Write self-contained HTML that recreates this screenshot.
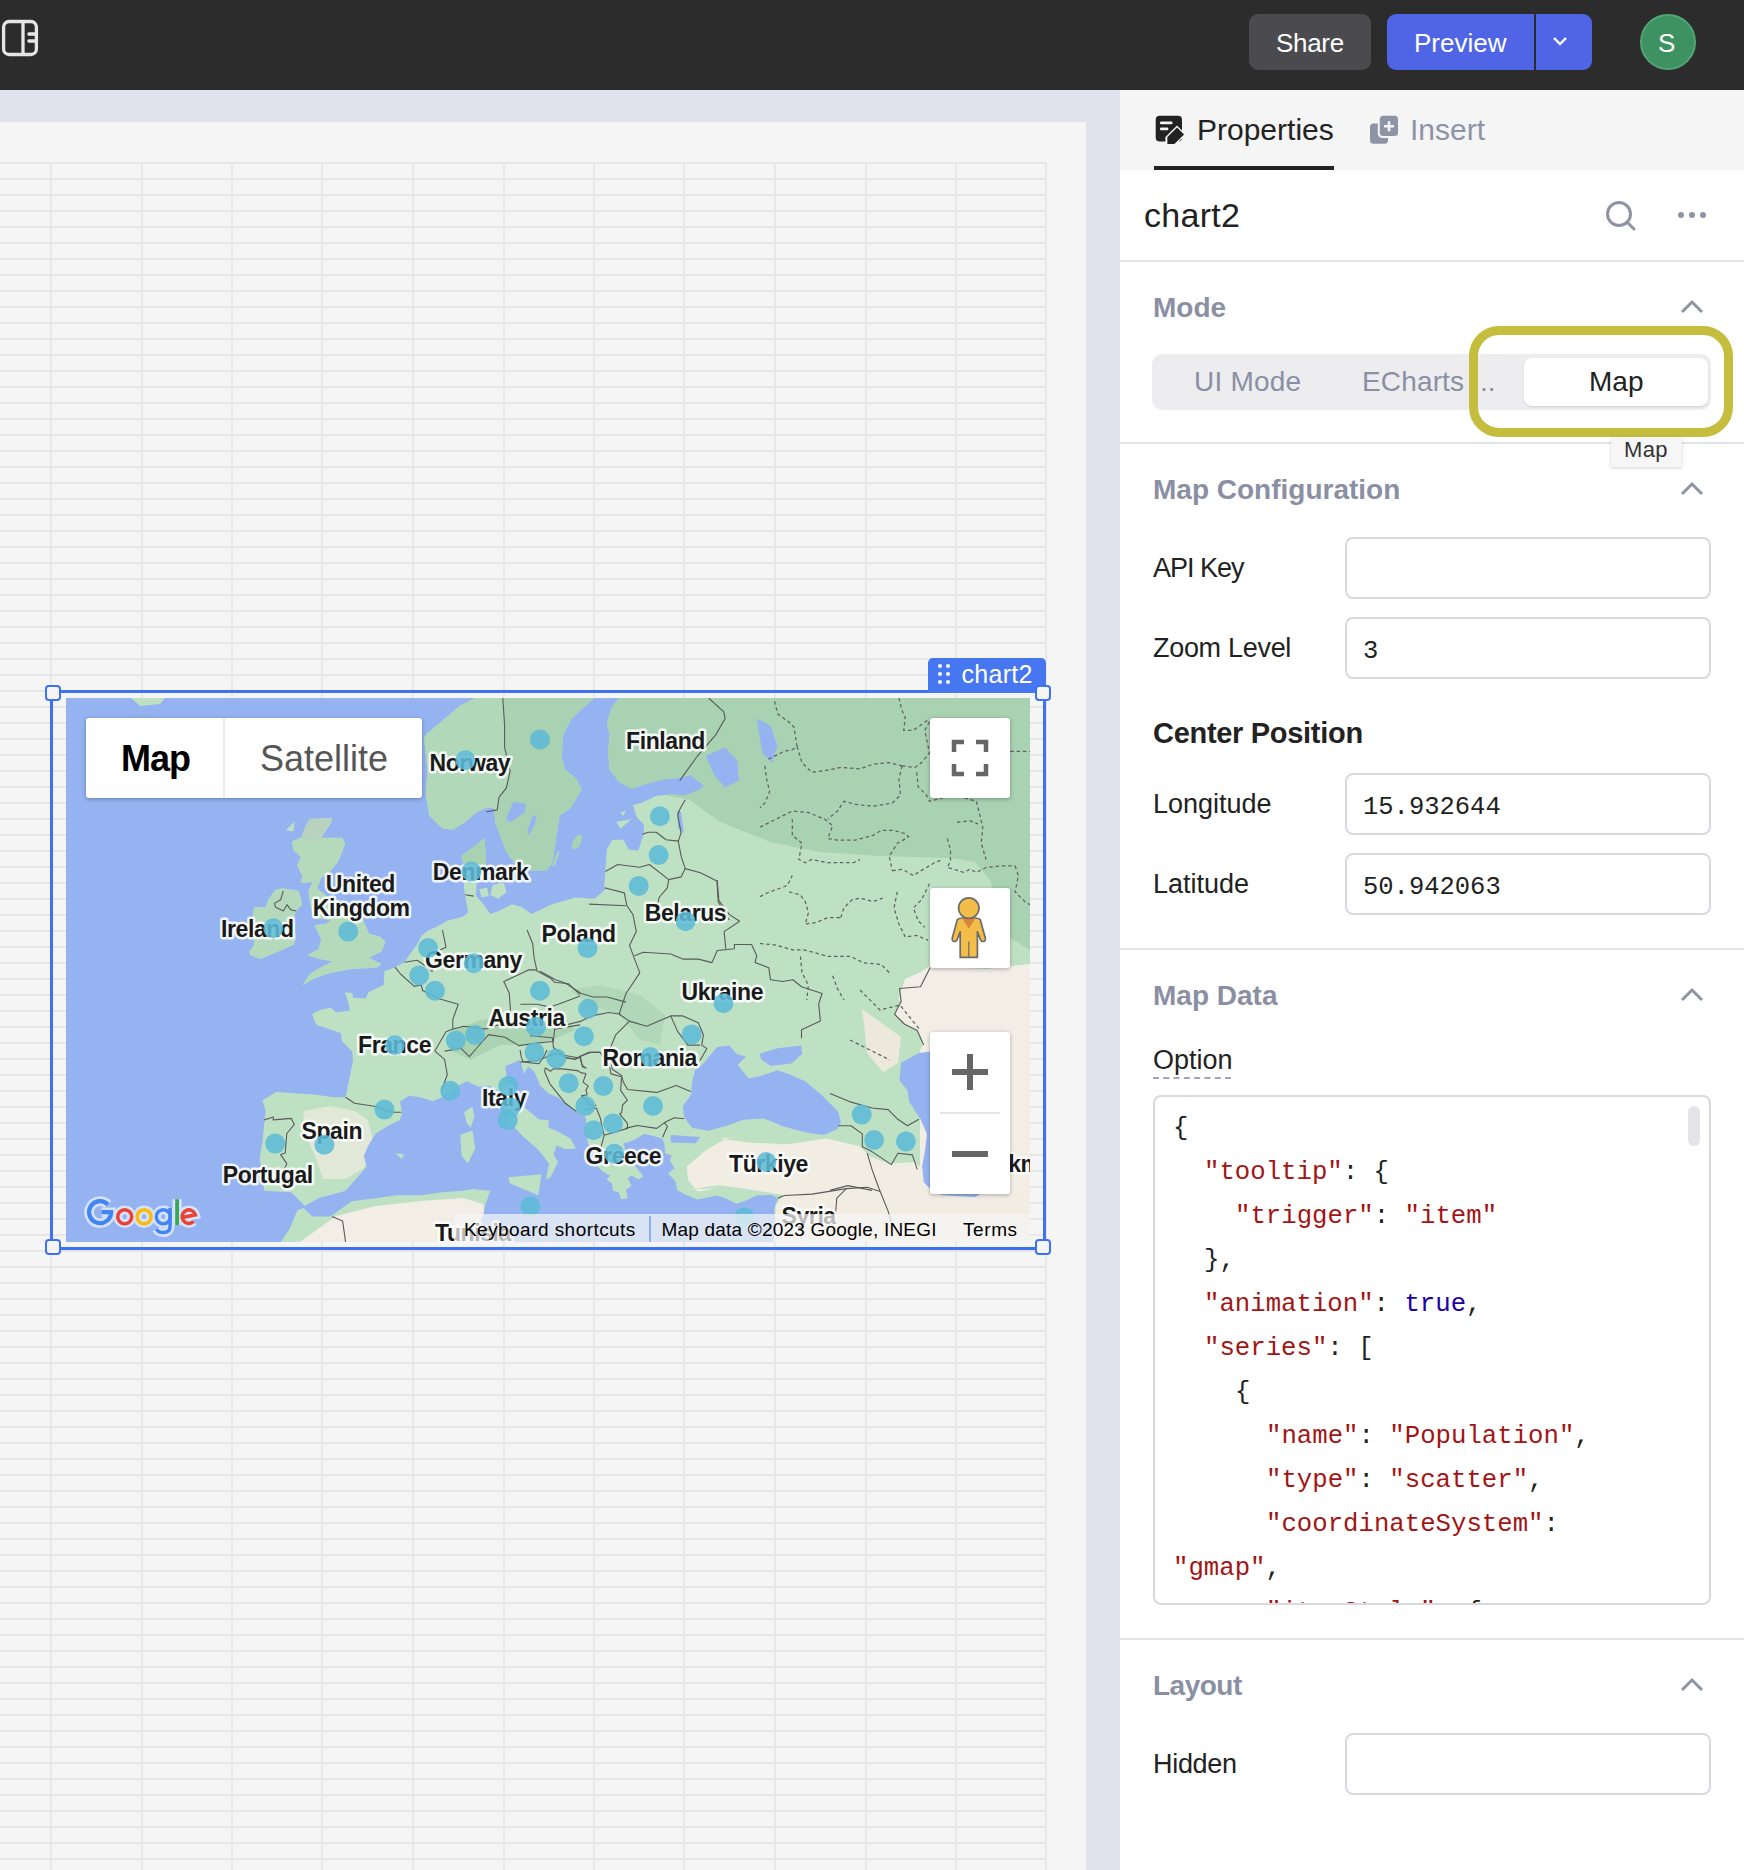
<!DOCTYPE html>
<html><head><meta charset="utf-8"><style>
html,body{margin:0;padding:0}
body{width:1744px;height:1870px;position:relative;overflow:hidden;background:#fff;font-family:"Liberation Sans",sans-serif}
.t{position:absolute;white-space:pre;line-height:1}
</style></head><body>
<div style="position:absolute;left:0px;top:90px;width:1120px;height:1780px;background:#e0e3eb"></div><div style="position:absolute;left:0px;top:122px;width:1086px;height:1748px;background:#f5f5f5"></div><svg style="position:absolute;left:0;top:0" width="1086" height="1870" shape-rendering="crispEdges"><rect x="0" y="162" width="1047" height="2" fill="#e6e6e6"/><rect x="0" y="178" width="1047" height="2" fill="#e6e6e6"/><rect x="0" y="194" width="1047" height="2" fill="#e6e6e6"/><rect x="0" y="210" width="1047" height="2" fill="#e6e6e6"/><rect x="0" y="226" width="1047" height="2" fill="#e6e6e6"/><rect x="0" y="242" width="1047" height="2" fill="#e6e6e6"/><rect x="0" y="258" width="1047" height="2" fill="#e6e6e6"/><rect x="0" y="274" width="1047" height="2" fill="#e6e6e6"/><rect x="0" y="290" width="1047" height="2" fill="#e6e6e6"/><rect x="0" y="306" width="1047" height="2" fill="#e6e6e6"/><rect x="0" y="322" width="1047" height="2" fill="#e6e6e6"/><rect x="0" y="338" width="1047" height="2" fill="#e6e6e6"/><rect x="0" y="354" width="1047" height="2" fill="#e6e6e6"/><rect x="0" y="370" width="1047" height="2" fill="#e6e6e6"/><rect x="0" y="386" width="1047" height="2" fill="#e6e6e6"/><rect x="0" y="402" width="1047" height="2" fill="#e6e6e6"/><rect x="0" y="418" width="1047" height="2" fill="#e6e6e6"/><rect x="0" y="434" width="1047" height="2" fill="#e6e6e6"/><rect x="0" y="450" width="1047" height="2" fill="#e6e6e6"/><rect x="0" y="466" width="1047" height="2" fill="#e6e6e6"/><rect x="0" y="482" width="1047" height="2" fill="#e6e6e6"/><rect x="0" y="498" width="1047" height="2" fill="#e6e6e6"/><rect x="0" y="514" width="1047" height="2" fill="#e6e6e6"/><rect x="0" y="530" width="1047" height="2" fill="#e6e6e6"/><rect x="0" y="546" width="1047" height="2" fill="#e6e6e6"/><rect x="0" y="562" width="1047" height="2" fill="#e6e6e6"/><rect x="0" y="578" width="1047" height="2" fill="#e6e6e6"/><rect x="0" y="594" width="1047" height="2" fill="#e6e6e6"/><rect x="0" y="610" width="1047" height="2" fill="#e6e6e6"/><rect x="0" y="626" width="1047" height="2" fill="#e6e6e6"/><rect x="0" y="642" width="1047" height="2" fill="#e6e6e6"/><rect x="0" y="658" width="1047" height="2" fill="#e6e6e6"/><rect x="0" y="674" width="1047" height="2" fill="#e6e6e6"/><rect x="0" y="690" width="1047" height="2" fill="#e6e6e6"/><rect x="0" y="706" width="1047" height="2" fill="#e6e6e6"/><rect x="0" y="722" width="1047" height="2" fill="#e6e6e6"/><rect x="0" y="738" width="1047" height="2" fill="#e6e6e6"/><rect x="0" y="754" width="1047" height="2" fill="#e6e6e6"/><rect x="0" y="770" width="1047" height="2" fill="#e6e6e6"/><rect x="0" y="786" width="1047" height="2" fill="#e6e6e6"/><rect x="0" y="802" width="1047" height="2" fill="#e6e6e6"/><rect x="0" y="818" width="1047" height="2" fill="#e6e6e6"/><rect x="0" y="834" width="1047" height="2" fill="#e6e6e6"/><rect x="0" y="850" width="1047" height="2" fill="#e6e6e6"/><rect x="0" y="866" width="1047" height="2" fill="#e6e6e6"/><rect x="0" y="882" width="1047" height="2" fill="#e6e6e6"/><rect x="0" y="898" width="1047" height="2" fill="#e6e6e6"/><rect x="0" y="914" width="1047" height="2" fill="#e6e6e6"/><rect x="0" y="930" width="1047" height="2" fill="#e6e6e6"/><rect x="0" y="946" width="1047" height="2" fill="#e6e6e6"/><rect x="0" y="962" width="1047" height="2" fill="#e6e6e6"/><rect x="0" y="978" width="1047" height="2" fill="#e6e6e6"/><rect x="0" y="994" width="1047" height="2" fill="#e6e6e6"/><rect x="0" y="1010" width="1047" height="2" fill="#e6e6e6"/><rect x="0" y="1026" width="1047" height="2" fill="#e6e6e6"/><rect x="0" y="1042" width="1047" height="2" fill="#e6e6e6"/><rect x="0" y="1058" width="1047" height="2" fill="#e6e6e6"/><rect x="0" y="1074" width="1047" height="2" fill="#e6e6e6"/><rect x="0" y="1090" width="1047" height="2" fill="#e6e6e6"/><rect x="0" y="1106" width="1047" height="2" fill="#e6e6e6"/><rect x="0" y="1122" width="1047" height="2" fill="#e6e6e6"/><rect x="0" y="1138" width="1047" height="2" fill="#e6e6e6"/><rect x="0" y="1154" width="1047" height="2" fill="#e6e6e6"/><rect x="0" y="1170" width="1047" height="2" fill="#e6e6e6"/><rect x="0" y="1186" width="1047" height="2" fill="#e6e6e6"/><rect x="0" y="1202" width="1047" height="2" fill="#e6e6e6"/><rect x="0" y="1218" width="1047" height="2" fill="#e6e6e6"/><rect x="0" y="1234" width="1047" height="2" fill="#e6e6e6"/><rect x="0" y="1250" width="1047" height="2" fill="#e6e6e6"/><rect x="0" y="1266" width="1047" height="2" fill="#e6e6e6"/><rect x="0" y="1282" width="1047" height="2" fill="#e6e6e6"/><rect x="0" y="1298" width="1047" height="2" fill="#e6e6e6"/><rect x="0" y="1314" width="1047" height="2" fill="#e6e6e6"/><rect x="0" y="1330" width="1047" height="2" fill="#e6e6e6"/><rect x="0" y="1346" width="1047" height="2" fill="#e6e6e6"/><rect x="0" y="1362" width="1047" height="2" fill="#e6e6e6"/><rect x="0" y="1378" width="1047" height="2" fill="#e6e6e6"/><rect x="0" y="1394" width="1047" height="2" fill="#e6e6e6"/><rect x="0" y="1410" width="1047" height="2" fill="#e6e6e6"/><rect x="0" y="1426" width="1047" height="2" fill="#e6e6e6"/><rect x="0" y="1442" width="1047" height="2" fill="#e6e6e6"/><rect x="0" y="1458" width="1047" height="2" fill="#e6e6e6"/><rect x="0" y="1474" width="1047" height="2" fill="#e6e6e6"/><rect x="0" y="1490" width="1047" height="2" fill="#e6e6e6"/><rect x="0" y="1506" width="1047" height="2" fill="#e6e6e6"/><rect x="0" y="1522" width="1047" height="2" fill="#e6e6e6"/><rect x="0" y="1538" width="1047" height="2" fill="#e6e6e6"/><rect x="0" y="1554" width="1047" height="2" fill="#e6e6e6"/><rect x="0" y="1570" width="1047" height="2" fill="#e6e6e6"/><rect x="0" y="1586" width="1047" height="2" fill="#e6e6e6"/><rect x="0" y="1602" width="1047" height="2" fill="#e6e6e6"/><rect x="0" y="1618" width="1047" height="2" fill="#e6e6e6"/><rect x="0" y="1634" width="1047" height="2" fill="#e6e6e6"/><rect x="0" y="1650" width="1047" height="2" fill="#e6e6e6"/><rect x="0" y="1666" width="1047" height="2" fill="#e6e6e6"/><rect x="0" y="1682" width="1047" height="2" fill="#e6e6e6"/><rect x="0" y="1698" width="1047" height="2" fill="#e6e6e6"/><rect x="0" y="1714" width="1047" height="2" fill="#e6e6e6"/><rect x="0" y="1730" width="1047" height="2" fill="#e6e6e6"/><rect x="0" y="1746" width="1047" height="2" fill="#e6e6e6"/><rect x="0" y="1762" width="1047" height="2" fill="#e6e6e6"/><rect x="0" y="1778" width="1047" height="2" fill="#e6e6e6"/><rect x="0" y="1794" width="1047" height="2" fill="#e6e6e6"/><rect x="0" y="1810" width="1047" height="2" fill="#e6e6e6"/><rect x="0" y="1826" width="1047" height="2" fill="#e6e6e6"/><rect x="0" y="1842" width="1047" height="2" fill="#e6e6e6"/><rect x="0" y="1858" width="1047" height="2" fill="#e6e6e6"/><rect x="50" y="162" width="2" height="1708" fill="#e8e8e8"/><rect x="141" y="162" width="2" height="1708" fill="#e8e8e8"/><rect x="231" y="162" width="2" height="1708" fill="#e8e8e8"/><rect x="321" y="162" width="2" height="1708" fill="#e8e8e8"/><rect x="412" y="162" width="2" height="1708" fill="#e8e8e8"/><rect x="503" y="162" width="2" height="1708" fill="#e8e8e8"/><rect x="593" y="162" width="2" height="1708" fill="#e8e8e8"/><rect x="683" y="162" width="2" height="1708" fill="#e8e8e8"/><rect x="774" y="162" width="2" height="1708" fill="#e8e8e8"/><rect x="865" y="162" width="2" height="1708" fill="#e8e8e8"/><rect x="955" y="162" width="2" height="1708" fill="#e8e8e8"/><rect x="1045" y="162" width="2" height="1708" fill="#e8e8e8"/></svg><div style="position:absolute;left:0px;top:0px;width:1744px;height:90px;background:#2c2c2c"></div><svg style="position:absolute;left:0;top:16px" width="44" height="44" viewBox="0 0 44 44"><rect x="3.6" y="5.5" width="32.8" height="33" rx="5.5" fill="none" stroke="#e6e6e6" stroke-width="3.3"/><line x1="23" y1="5.5" x2="23" y2="38.5" stroke="#e6e6e6" stroke-width="3.3"/><line x1="29" y1="18" x2="36" y2="18" stroke="#e6e6e6" stroke-width="3.6" stroke-linecap="round"/><line x1="29" y1="25" x2="36" y2="25" stroke="#e6e6e6" stroke-width="3.6" stroke-linecap="round"/></svg><div style="position:absolute;left:1249px;top:14px;width:122px;height:56px;background:#4a4a4f;border-radius:9px"></div><div class="t" style="left:1276px;top:29.99px;font-size:26px;color:#fff;font-weight:normal;font-family:'Liberation Sans',sans-serif;letter-spacing:-0.3px;">Share</div><div style="position:absolute;left:1387px;top:14px;width:205px;height:56px;background:#4f65e6;border-radius:9px"></div><div style="position:absolute;left:1534px;top:14px;width:2px;height:56px;background:#2c2c2c"></div><div class="t" style="left:1414px;top:29.99px;font-size:26px;color:#fff;font-weight:normal;font-family:'Liberation Sans',sans-serif;">Preview</div><svg style="position:absolute;left:1550px;top:34px" width="20" height="14" viewBox="0 0 20 14"><polyline points="4,4 10,10 16,4" fill="none" stroke="#fff" stroke-width="2.4"/></svg><div style="position:absolute;left:1640px;top:14px;width:56px;height:56px;background:#3e9160;border-radius:50%;box-sizing:border-box;border:2px solid #52a574"></div><div class="t" style="left:1658px;top:29.99px;font-size:26px;color:#fff;font-weight:normal;font-family:'Liberation Sans',sans-serif;">S</div><div style="position:absolute;left:1120px;top:90px;width:624px;height:80px;background:#f5f5f5"></div><div style="position:absolute;left:1120px;top:170px;width:624px;height:1700px;background:#fff"></div><svg style="position:absolute;left:1154px;top:112px" width="34" height="34" viewBox="0 0 34 34"><rect x="1.7" y="3.7" width="26.3" height="25.8" rx="4" fill="#222"/><rect x="5.9" y="9.6" width="12.7" height="2.6" rx="1.3" fill="#f5f5f5"/><rect x="5.9" y="15.6" width="8.5" height="2.6" rx="1.3" fill="#f5f5f5"/><path d="M11.4 25 L23 13.4 L32 22.4 L20.4 34 L11.4 34 Z" fill="#f5f5f5"/><path d="M13.4 25.05 L23.05 15.4 L30.06 22.4 L20.4 32.1 L13.4 32.1 Z" fill="#222"/></svg><div class="t" style="left:1197px;top:114.61px;font-size:30px;color:#222;font-weight:normal;font-family:'Liberation Sans',sans-serif;">Properties</div><div style="position:absolute;left:1154px;top:166px;width:180px;height:4px;background:#222"></div><svg style="position:absolute;left:1368px;top:112px" width="34" height="34" viewBox="0 0 34 34"><rect x="2" y="11.6" width="18" height="20.2" rx="3.5" fill="#8f93a6"/><rect x="9.8" y="1.7" width="22.2" height="24.3" rx="4.5" fill="#f5f5f5"/><rect x="11.8" y="3.7" width="18.2" height="20.3" rx="3.5" fill="#8f93a6"/><path d="M21 9.3 V19.3 M16 14.3 H26" stroke="#f5f5f5" stroke-width="2.6"/></svg><div class="t" style="left:1410px;top:114.61px;font-size:30px;color:#8f93a6;font-weight:normal;font-family:'Liberation Sans',sans-serif;">Insert</div><div class="t" style="left:1144px;top:198.22px;font-size:34px;color:#222;font-weight:normal;font-family:'Liberation Sans',sans-serif;letter-spacing:0.3px;">chart2</div><svg style="position:absolute;left:1600px;top:196px" width="40" height="40" viewBox="0 0 40 40"><circle cx="19" cy="18" r="11.5" fill="none" stroke="#8f93a6" stroke-width="3"/><line x1="27.5" y1="26.5" x2="34" y2="33" stroke="#8f93a6" stroke-width="3" stroke-linecap="round"/></svg><div style="position:absolute;left:1678px;top:212px;width:6px;height:6px;background:#8f93a6;border-radius:50%"></div><div style="position:absolute;left:1689px;top:212px;width:6px;height:6px;background:#8f93a6;border-radius:50%"></div><div style="position:absolute;left:1700px;top:212px;width:6px;height:6px;background:#8f93a6;border-radius:50%"></div><div style="position:absolute;left:1120px;top:260px;width:624px;height:2px;background:#e2e4ea"></div><div class="t" style="left:1153px;top:294.30px;font-size:28px;color:#8b8fa3;font-weight:bold;font-family:'Liberation Sans',sans-serif;">Mode</div><svg style="position:absolute;left:1678px;top:298px" width="28" height="18" viewBox="0 0 28 18"><polyline points="4,14 14,4 24,14" fill="none" stroke="#8f93a6" stroke-width="3"/></svg><div style="position:absolute;left:1152px;top:354px;width:559px;height:56px;background:#ededf0;border-radius:10px"></div><div style="position:absolute;left:1524px;top:358px;width:184px;height:48px;background:#fff;border-radius:8px;box-shadow:0 1px 2px rgba(0,0,0,0.12)"></div><div class="t" style="left:1194px;top:368.30px;font-size:28px;color:#8b8fa3;font-weight:normal;font-family:'Liberation Sans',sans-serif;letter-spacing:0.2px;">UI Mode</div><div class="t" style="left:1362px;top:368.30px;font-size:28px;color:#8b8fa3;font-weight:normal;font-family:'Liberation Sans',sans-serif;letter-spacing:0.15px;">ECharts</div><div class="t" style="left:1480px;top:368.30px;font-size:28px;color:#8b8fa3;font-weight:normal;font-family:'Liberation Sans',sans-serif;">..</div><div class="t" style="left:1589px;top:368.30px;font-size:28px;color:#222;font-weight:normal;font-family:'Liberation Sans',sans-serif;">Map</div><div style="position:absolute;left:1469px;top:326px;width:264px;height:111px;box-sizing:border-box;border:9px solid #c5bd3d;border-radius:30px"></div><div style="position:absolute;left:1120px;top:442px;width:624px;height:2px;background:#e2e4ea"></div><div style="position:absolute;left:1611px;top:437px;width:71px;height:30px;background:#f6f6f6;box-shadow:0 1px 3px rgba(0,0,0,0.18)"></div><div class="t" style="left:1624px;top:439.38px;font-size:22px;color:#333;font-weight:normal;font-family:'Liberation Sans',sans-serif;letter-spacing:0.3px;">Map</div><div class="t" style="left:1153px;top:476.30px;font-size:28px;color:#8b8fa3;font-weight:bold;font-family:'Liberation Sans',sans-serif;">Map Configuration</div><svg style="position:absolute;left:1678px;top:480px" width="28" height="18" viewBox="0 0 28 18"><polyline points="4,14 14,4 24,14" fill="none" stroke="#8f93a6" stroke-width="3"/></svg><div class="t" style="left:1153px;top:555.14px;font-size:27px;color:#222;font-weight:normal;font-family:'Liberation Sans',sans-serif;letter-spacing:-1.0px;">API Key</div><div style="position:absolute;left:1345px;top:537px;width:366px;height:62px;box-sizing:border-box;border:2px solid #d8d9df;border-radius:8px;background:#fff"></div><div class="t" style="left:1153px;top:635.14px;font-size:27px;color:#222;font-weight:normal;font-family:'Liberation Sans',sans-serif;letter-spacing:-0.3px;">Zoom Level</div><div style="position:absolute;left:1345px;top:617px;width:366px;height:62px;box-sizing:border-box;border:2px solid #d8d9df;border-radius:8px;background:#fff"></div><div class="t" style="left:1363px;top:639.47px;font-size:25.5px;color:#222;font-weight:normal;font-family:'Liberation Mono',monospace;">3</div><div class="t" style="left:1153px;top:719.45px;font-size:29px;color:#222;font-weight:bold;font-family:'Liberation Sans',sans-serif;letter-spacing:-0.3px;">Center Position</div><div class="t" style="left:1153px;top:791.14px;font-size:27px;color:#222;font-weight:normal;font-family:'Liberation Sans',sans-serif;">Longitude</div><div style="position:absolute;left:1345px;top:773px;width:366px;height:62px;box-sizing:border-box;border:2px solid #d8d9df;border-radius:8px;background:#fff"></div><div class="t" style="left:1363px;top:795.47px;font-size:25.5px;color:#222;font-weight:normal;font-family:'Liberation Mono',monospace;">15.932644</div><div class="t" style="left:1153px;top:871.14px;font-size:27px;color:#222;font-weight:normal;font-family:'Liberation Sans',sans-serif;">Latitude</div><div style="position:absolute;left:1345px;top:853px;width:366px;height:62px;box-sizing:border-box;border:2px solid #d8d9df;border-radius:8px;background:#fff"></div><div class="t" style="left:1363px;top:875.47px;font-size:25.5px;color:#222;font-weight:normal;font-family:'Liberation Mono',monospace;">50.942063</div><div style="position:absolute;left:1120px;top:948px;width:624px;height:2px;background:#e2e4ea"></div><div class="t" style="left:1153px;top:982.30px;font-size:28px;color:#8b8fa3;font-weight:bold;font-family:'Liberation Sans',sans-serif;">Map Data</div><svg style="position:absolute;left:1678px;top:986px" width="28" height="18" viewBox="0 0 28 18"><polyline points="4,14 14,4 24,14" fill="none" stroke="#8f93a6" stroke-width="3"/></svg><div class="t" style="left:1153px;top:1047.14px;font-size:27px;color:#222;font-weight:normal;font-family:'Liberation Sans',sans-serif;">Option</div><div style="position:absolute;left:1153px;top:1077px;width:78px;height:0;border-top:2px dashed #a0a4b8"></div><div style="position:absolute;left:1153px;top:1095px;width:558px;height:510px;box-sizing:border-box;border:2px solid #d8d9df;border-radius:8px;background:#fff"></div><div style="position:absolute;left:1688px;top:1106px;width:12px;height:40px;background:#e3e3e8;border-radius:6px"></div><div style="position:absolute;left:1155px;top:1097px;width:554px;height:506px;overflow:hidden;border-radius:6px"><div class="t" style="left:18px;top:19.31px;font-size:25.7px;color:#222;font-weight:normal;font-family:'Liberation Mono',monospace;"><span style="color:#222">{</span></div><div class="t" style="left:49px;top:63.31px;font-size:25.7px;color:#222;font-weight:normal;font-family:'Liberation Mono',monospace;"><span style="color:#a31515">"tooltip"</span><span style="color:#222">:&nbsp;{</span></div><div class="t" style="left:80px;top:107.31px;font-size:25.7px;color:#222;font-weight:normal;font-family:'Liberation Mono',monospace;"><span style="color:#a31515">"trigger"</span><span style="color:#222">:&nbsp;</span><span style="color:#a31515">"item"</span></div><div class="t" style="left:49px;top:151.31px;font-size:25.7px;color:#222;font-weight:normal;font-family:'Liberation Mono',monospace;"><span style="color:#222">},</span></div><div class="t" style="left:49px;top:195.31px;font-size:25.7px;color:#222;font-weight:normal;font-family:'Liberation Mono',monospace;"><span style="color:#a31515">"animation"</span><span style="color:#222">:&nbsp;</span><span style="color:#1c00a3">true</span><span style="color:#222">,</span></div><div class="t" style="left:49px;top:239.31px;font-size:25.7px;color:#222;font-weight:normal;font-family:'Liberation Mono',monospace;"><span style="color:#a31515">"series"</span><span style="color:#222">:&nbsp;[</span></div><div class="t" style="left:80px;top:283.31px;font-size:25.7px;color:#222;font-weight:normal;font-family:'Liberation Mono',monospace;"><span style="color:#222">{</span></div><div class="t" style="left:111px;top:327.31px;font-size:25.7px;color:#222;font-weight:normal;font-family:'Liberation Mono',monospace;"><span style="color:#a31515">"name"</span><span style="color:#222">:&nbsp;</span><span style="color:#a31515">"Population"</span><span style="color:#222">,</span></div><div class="t" style="left:111px;top:371.31px;font-size:25.7px;color:#222;font-weight:normal;font-family:'Liberation Mono',monospace;"><span style="color:#a31515">"type"</span><span style="color:#222">:&nbsp;</span><span style="color:#a31515">"scatter"</span><span style="color:#222">,</span></div><div class="t" style="left:111px;top:415.31px;font-size:25.7px;color:#222;font-weight:normal;font-family:'Liberation Mono',monospace;"><span style="color:#a31515">"coordinateSystem"</span><span style="color:#222">:</span></div><div class="t" style="left:18px;top:459.31px;font-size:25.7px;color:#222;font-weight:normal;font-family:'Liberation Mono',monospace;"><span style="color:#a31515">"gmap"</span><span style="color:#222">,</span></div><div class="t" style="left:111px;top:503.31px;font-size:25.7px;color:#222;font-weight:normal;font-family:'Liberation Mono',monospace;"><span style="color:#a31515">"itemStyle"</span><span style="color:#222">:&nbsp;{</span></div></div><div style="position:absolute;left:1120px;top:1638px;width:624px;height:2px;background:#e2e4ea"></div><div class="t" style="left:1153px;top:1672.30px;font-size:28px;color:#8b8fa3;font-weight:bold;font-family:'Liberation Sans',sans-serif;letter-spacing:-0.5px;">Layout</div><svg style="position:absolute;left:1678px;top:1676px" width="28" height="18" viewBox="0 0 28 18"><polyline points="4,14 14,4 24,14" fill="none" stroke="#8f93a6" stroke-width="3"/></svg><div class="t" style="left:1153px;top:1751.14px;font-size:27px;color:#222;font-weight:normal;font-family:'Liberation Sans',sans-serif;letter-spacing:-0.3px;">Hidden</div><div style="position:absolute;left:1345px;top:1733px;width:366px;height:62px;box-sizing:border-box;border:2px solid #d8d9df;border-radius:8px;background:#fff"></div><svg style="position:absolute;left:66px;top:698px" width="964" height="544" viewBox="66 698 964 544"><defs><clipPath id="land"><path d="M619.0,698.0 L1030.0,698.0 L1030.0,1242.0 L790.0,1242.0 L774.0,1242.0 L775.5,1218.9 L774.2,1209.3 L777.6,1198.2 L772.1,1194.8 L757.0,1195.5 L744.6,1201.0 L736.3,1203.8 L725.3,1198.2 L717.1,1195.5 L697.8,1199.6 L699.3,1200.2 L685.5,1194.7 L677.2,1190.1 L675.4,1180.9 L668.1,1173.6 L674.5,1168.1 L669.9,1160.7 L671.7,1155.2 L665.3,1153.4 L664.4,1144.2 L662.6,1138.7 L649.7,1135.0 L644.2,1134.1 L635.0,1139.6 L627.7,1142.4 L623.1,1143.3 L625.9,1151.6 L631.4,1160.7 L636.0,1167.2 L643.3,1176.3 L638.7,1179.5 L631.4,1175.4 L627.7,1178.2 L631.4,1185.5 L625.9,1190.1 L627.7,1198.3 L621.3,1199.3 L618.5,1191.9 L613.0,1191.0 L612.1,1183.7 L606.6,1179.1 L610.3,1175.4 L602.9,1171.7 L598.3,1167.2 L593.8,1153.4 L588.3,1144.2 L585.5,1131.4 L586.4,1116.7 L587.5,1127.5 L587.2,1121.7 L584.9,1116.5 L576.3,1111.4 L565.9,1103.3 L557.3,1097.0 L548.7,1093.6 L540.1,1085.6 L537.3,1078.7 L534.4,1071.8 L528.1,1066.6 L524.1,1074.1 L520.1,1060.3 L519.8,1060.0 L505.3,1066.2 L506.3,1074.1 L506.7,1082.7 L525.2,1107.9 L539.0,1119.4 L548.7,1120.0 L548.2,1127.4 L560.2,1132.6 L571.7,1139.4 L571.6,1141.0 L576.1,1148.5 L565.6,1149.3 L556.5,1145.5 L553.5,1154.6 L558.0,1162.1 L550.5,1177.2 L546.0,1179.5 L549.0,1163.6 L538.4,1150.0 L524.9,1138.0 L509.8,1122.9 L502.2,1107.8 L501.2,1092.3 L488.8,1085.4 L478.5,1086.8 L466.8,1081.3 L458.5,1085.4 L442.7,1097.1 L432.4,1101.3 L427.6,1099.2 L420.0,1097.8 L454.2,1089.7 L442.1,1095.7 L431.6,1100.3 L421.0,1097.3 L408.9,1095.7 L399.9,1101.8 L402.1,1112.3 L399.9,1119.9 L387.8,1125.9 L375.7,1133.5 L368.2,1145.5 L363.7,1156.1 L366.7,1166.6 L357.6,1177.2 L345.6,1190.8 L318.4,1198.3 L304.9,1205.9 L300.3,1201.3 L291.3,1192.3 L264.1,1190.8 L262.6,1174.2 L259.6,1159.1 L262.6,1141.0 L264.1,1125.9 L265.6,1110.8 L262.6,1100.3 L276.2,1092.0 L297.3,1093.5 L312.4,1094.2 L333.5,1097.3 L345.6,1097.3 L353.1,1060.0 L352.2,1051.6 L341.8,1041.1 L341.0,1033.1 L316.9,1025.1 L314.5,1021.1 L312.1,1013.9 L318.5,1010.6 L330.6,1007.4 L336.2,1012.2 L349.8,1010.6 L348.2,1001.8 L345.0,992.2 L352.2,993.0 L353.1,997.8 L365.9,998.6 L368.3,992.2 L383.6,985.0 L384.4,971.3 L394.8,967.3 L408.4,956.1 L395.1,967.6 L404.8,962.1 L410.3,953.8 L417.2,944.2 L421.3,936.0 L428.2,930.5 L437.8,926.3 L447.4,920.8 L462.6,916.7 L468.1,912.6 L463.9,887.8 L465.3,868.5 L461.2,856.1 L476.3,845.1 L484.6,838.3 L486.0,863.0 L484.6,871.3 L476.3,885.0 L476.3,896.1 L484.6,905.7 L490.1,913.9 L498.3,911.2 L512.1,904.3 L521.7,907.1 L531.4,913.9 L552.0,904.3 L575.4,897.4 L594.7,898.8 L607.1,887.8 L604.0,887.9 L605.4,870.0 L606.8,849.4 L612.3,839.7 L623.3,839.7 L628.8,849.4 L638.4,850.7 L641.2,841.1 L643.9,834.2 L643.9,824.6 L637.1,817.7 L632.9,805.3 L642.6,802.6 L656.3,795.7 L674.2,794.3 L683.8,795.7 L692.1,792.9 L697.6,790.2 L704.5,786.1 L697.6,780.6 L690.7,775.1 L679.7,777.8 L664.6,779.2 L648.1,783.3 L631.6,788.8 L619.2,781.9 L615.0,776.4 L609.5,769.6 L608.2,753.0 L609.5,733.8 L606.8,722.8 L612.3,706.3 L619.2,698.0Z"/><path d="M475.2,698.0 L460.6,705.3 L447.7,716.3 L423.9,736.5 L425.7,753.0 L427.5,771.4 L425.7,793.4 L429.4,815.4 L442.2,828.3 L453.2,830.1 L464.2,822.8 L477.1,811.8 L486.2,808.1 L493.6,808.1 L495.4,822.8 L500.9,837.4 L506.4,852.1 L517.4,866.8 L528.4,870.5 L546.8,870.5 L552.3,863.1 L554.1,852.1 L557.8,826.4 L559.6,815.4 L570.6,808.1 L581.7,789.7 L576.1,778.7 L565.1,769.6 L561.5,756.7 L563.3,734.7 L570.6,720.0 L581.7,709.0 L594.5,698.0Z"/><path d="M280.7,1242.1 L289.8,1228.5 L297.3,1210.4 L303.3,1208.1 L312.4,1216.4 L330.5,1216.4 L351.6,1201.3 L375.7,1198.3 L396.9,1195.3 L421.0,1195.3 L442.1,1192.3 L463.2,1190.8 L480.0,1187.8 L473.6,1189.3 L490.2,1190.8 L485.6,1204.3 L482.6,1216.4 L470.0,1242.0Z"/><path d="M331.8,817.7 L331.2,822.7 L321.1,837.8 L342.6,837.8 L345.1,844.2 L338.8,860.6 L331.2,870.6 L321.1,878.2 L317.3,888.3 L326.2,895.9 L338.8,900.9 L362.7,918.6 L369.0,933.7 L379.1,936.2 L385.4,941.3 L381.7,951.4 L369.0,957.7 L381.7,964.0 L376.6,967.8 L351.4,969.0 L326.2,974.1 L313.5,979.1 L302.2,985.4 L309.8,974.1 L319.8,967.8 L332.5,961.5 L319.8,959.0 L307.2,955.2 L318.6,948.9 L321.1,938.8 L316.1,928.7 L314.8,924.9 L326.2,923.6 L331.2,919.8 L313.5,918.6 L309.8,900.9 L308.5,890.8 L312.3,882.0 L300.9,883.3 L302.2,875.7 L297.1,865.6 L300.9,856.8 L293.4,850.5 L292.1,841.6 L300.9,837.8 L306.0,825.2 L309.8,818.9Z"/><path d="M268.1,899.7 L275.7,889.6 L283.3,888.3 L298.4,890.8 L300.9,898.4 L302.2,904.7 L295.9,911.0 L293.4,921.1 L295.9,938.8 L293.4,945.1 L278.2,951.4 L260.6,959.0 L250.5,955.2 L249.2,951.4 L254.2,945.1 L254.2,938.8 L253.0,913.5 L254.2,907.2 L265.6,907.2Z"/><path d="M285.8,830.3 L294.6,821.4 L293.4,831.5Z"/><path d="M131.0,698.0 L165.0,698.0 L160.0,704.0 L140.0,706.0Z"/><path d="M464.0,1112.3 L472.3,1106.8 L474.4,1115.7 L470.9,1127.4 L466.8,1123.3Z"/><path d="M460.2,1135.0 L472.3,1130.4 L475.3,1148.5 L467.8,1163.6 L461.7,1156.1Z"/><path d="M508.3,1177.2 L541.4,1174.2 L538.4,1195.3 L509.8,1183.2Z"/><path d="M395.4,1153.1 L404.4,1154.6 L401.4,1159.1Z"/><path d="M578.9,834.5 L582.3,836.2 L579.5,845.9 L574.3,849.6 L572.0,847.1 L573.4,840.2Z"/><path d="M557.7,851.1 L559.6,852.2 L554.2,866.6 L552.5,865.7Z"/><path d="M616.4,821.8 L631.6,819.1 L620.5,828.7Z"/><path d="M620.5,812.2 L626.1,810.8 L623.3,816.3Z"/><path d="M492.8,885.0 L503.8,882.3 L506.6,891.9 L498.3,898.8 L490.1,894.7Z"/><path d="M479.1,889.2 L487.3,887.8 L488.7,896.1 L481.8,897.4Z"/></clipPath></defs><rect x="66" y="698" width="964" height="544" fill="#94b3f0"/><g clip-path="url(#land)"><rect x="66" y="698" width="964" height="544" fill="#bee1c4"/><path d="M400.0,698.0 L1030.0,698.0 L1030.0,950.0 L1005.0,935.0 L990.0,880.0 L975.0,862.0 L950.0,858.0 L880.0,856.0 L820.0,852.0 L770.0,842.0 L720.0,822.0 L690.0,800.0 L640.0,790.0 L600.0,790.0 L575.0,880.0 L470.0,880.0 L400.0,840.0Z" fill="#a8d2b1" /><path d="M418.3,736.5 L475.2,694.3 L503.7,694.3 L504.6,747.5 L510.1,771.4 L497.2,809.9 L442.2,831.9 L425.7,817.3Z" fill="#b2d8ba" /><path d="M331.8,817.7 L331.2,822.7 L321.1,837.8 L342.6,837.8 L345.1,844.2 L338.8,860.6 L331.2,870.6 L321.1,878.2 L317.3,888.3 L326.2,895.9 L338.8,900.9 L362.7,918.6 L369.0,933.7 L379.1,936.2 L385.4,941.3 L381.7,951.4 L369.0,957.7 L381.7,964.0 L376.6,967.8 L351.4,969.0 L326.2,974.1 L313.5,979.1 L302.2,985.4 L309.8,974.1 L319.8,967.8 L332.5,961.5 L319.8,959.0 L307.2,955.2 L318.6,948.9 L321.1,938.8 L316.1,928.7 L314.8,924.9 L326.2,923.6 L331.2,919.8 L313.5,918.6 L309.8,900.9 L308.5,890.8 L312.3,882.0 L300.9,883.3 L302.2,875.7 L297.1,865.6 L300.9,856.8 L293.4,850.5 L292.1,841.6 L300.9,837.8 L306.0,825.2 L309.8,818.9Z" fill="#b4dabb" /><path d="M268.1,899.7 L275.7,889.6 L283.3,888.3 L298.4,890.8 L300.9,898.4 L302.2,904.7 L295.9,911.0 L293.4,921.1 L295.9,938.8 L293.4,945.1 L278.2,951.4 L260.6,959.0 L250.5,955.2 L249.2,951.4 L254.2,945.1 L254.2,938.8 L253.0,913.5 L254.2,907.2 L265.6,907.2Z" fill="#b4dabb" /><path d="M309.8,818.9 L331.2,817.7 L321.1,837.8 L311.0,841.6 L300.9,837.8 L306.0,825.2Z" fill="#b9d2c0" /><path d="M455.0,1030.0 L480.0,1020.0 L520.0,1015.0 L560.0,1012.0 L575.0,1030.0 L540.0,1045.0 L500.0,1045.0 L470.0,1060.0 L450.0,1050.0Z" fill="#aad3b2" /><path d="M570.0,990.0 L600.0,985.0 L640.0,995.0 L665.0,1015.0 L660.0,1045.0 L640.0,1040.0 L620.0,1015.0 L590.0,1005.0Z" fill="#b0d7b7" /><path d="M303.0,1111.0 L330.0,1106.0 L355.0,1111.0 L368.0,1120.0 L373.0,1141.0 L364.0,1168.0 L346.0,1179.0 L323.0,1179.0 L315.0,1156.0 L305.0,1133.0Z" fill="#e2e8d8" /><path d="M898.0,1000.0 L905.0,979.0 L921.0,972.0 L930.0,966.0 L986.0,969.0 L1030.0,964.0 L1030.0,1242.0 L920.0,1242.0 L920.0,1050.0 L923.0,1045.0 L917.0,1030.0 L904.0,1024.0 L895.0,1014.0 L901.0,1001.0Z" fill="#f2eee5" /><path d="M862.0,1009.0 L901.0,1037.0 L898.0,1063.0 L883.0,1072.0 L867.0,1053.0 L864.0,1024.0Z" fill="#ece9dc" /><path d="M686.8,1166.6 L706.1,1150.1 L725.3,1139.1 L736.3,1137.0 L719.2,1138.5 L748.5,1142.4 L787.5,1144.3 L826.5,1138.5 L859.6,1146.3 L869.3,1156.0 L888.8,1163.8 L914.2,1161.9 L923.9,1169.7 L922.0,1185.3 L941.5,1198.9 L978.5,1204.8 L1009.7,1193.1 L1030.0,1189.2 L1030.0,1242.0 L773.8,1242.0 L775.8,1204.8 L783.6,1195.0 L748.5,1189.2 L719.2,1185.3 L690.0,1189.2 L717.1,1188.6 L697.8,1191.4 L688.2,1180.4Z" fill="#f1ede3" /><path d="M300.0,1242.0 L336.0,1216.0 L376.0,1206.0 L421.0,1201.0 L463.0,1198.0 L483.0,1204.0 L490.0,1242.0Z" fill="#f2eee5" /></g><path d="M703.3,1063.4 L717.1,1046.9 L729.4,1045.5 L736.3,1053.8 L746.0,1056.5 L737.7,1064.8 L748.7,1078.5 L761.1,1075.8 L777.6,1070.3 L790.0,1074.4 L805.1,1081.3 L821.6,1095.0 L838.2,1111.6 L840.9,1122.6 L836.8,1129.4 L823.0,1134.9 L805.1,1132.2 L784.5,1126.7 L763.8,1118.4 L743.2,1119.8 L728.1,1125.3 L708.8,1130.8 L692.3,1128.1 L684.0,1117.1 L682.7,1106.1 L690.9,1095.0 L692.3,1081.3 L695.0,1070.3Z" fill="#94b3f0" /><path d="M759.7,1053.8 L777.6,1048.3 L801.0,1045.5 L802.4,1053.8 L791.4,1063.4 L770.7,1066.1 L761.1,1059.3Z" fill="#94b3f0" /><path d="M670.8,1135.0 L700.2,1136.9 L695.6,1143.3 L670.8,1142.4Z" fill="#94b3f0" /><path d="M901.1,1062.8 L918.9,1053.1 L930.2,1051.5 L991.6,1045.0 L999.6,1182.3 L975.4,1196.9 L943.1,1195.3 L933.4,1192.0 L923.7,1182.3 L922.1,1166.2 L925.3,1148.4 L926.9,1133.9 L920.5,1119.3 L909.2,1101.6 L907.5,1090.2 L899.5,1080.5Z" fill="#94b3f0" /><path d="M705.9,755.8 L725.1,747.5 L737.5,761.3 L738.9,780.6 L725.1,787.4 L714.1,775.1Z" fill="#94b3f0" /><path d="M756.8,718.6 L770.5,725.5 L777.4,746.2 L771.9,762.7 L762.3,753.0Z" fill="#94b3f0" /><path d="M677.0,810.8 L681.1,812.2 L683.8,832.9 L678.3,828.7Z" fill="#94b3f0" /><path d="M513.5,801.8 L526.1,804.1 L524.4,812.7 L510.1,822.4 L506.1,819.0 L510.7,808.1Z" fill="#94b3f0" /><path d="M531.9,817.3 L537.0,814.4 L534.7,825.3 L528.4,835.6 L527.3,832.2Z" fill="#94b3f0" /><g fill="none" stroke="#5a5a5a" stroke-width="1.1" stroke-linejoin="round"><path d="M283.3,890.8 L280.7,899.7 L274.4,903.4 L275.7,907.2 L283.3,911.0 L287.0,904.7 L290.8,909.8 L295.9,911.0"/><path d="M332.0,1216.4 L342.6,1220.9 L345.6,1242.1"/><path d="M502.8,698.0 L504.6,725.5 L504.6,747.5 L510.1,771.4 L506.4,787.9 L499.1,797.1 L497.2,809.9 L486.2,811.8"/><path d="M708.6,698.0 L723.8,711.8 L725.1,718.6 L715.5,735.2 L697.6,755.8 L679.7,780.6"/><path d="M685.2,799.8 L679.7,809.5 L677.7,815.0 L681.1,832.9 L678.3,841.1 L681.1,856.2 L685.2,868.6 L681.1,876.9 L668.7,879.6 L667.3,887.9 L659.1,897.5 L656.3,912.7"/><path d="M642.6,834.2 L648.1,832.2 L656.3,832.2 L666.0,839.7 L678.3,841.1"/><path d="M605.4,871.4 L617.8,864.5 L639.8,867.3 L649.4,864.5 L668.7,879.6"/><path d="M685.2,868.6 L700.4,872.8 L716.9,881.0 L718.2,901.7 L729.3,920.0"/><path d="M589.0,904.1 L626.0,905.8"/><path d="M604.5,887.7 L624.3,892.9 L626.9,905.8 L632.9,914.4 L636.3,931.6 L629.5,945.4 L634.6,959.1 L639.8,972.9 L626.0,993.5 L619.1,1014.2"/><path d="M634.6,955.7 L643.2,952.3 L670.7,954.0 L682.8,959.1 L698.3,959.1 L712.0,962.6 L717.2,950.5 L734.4,948.8 L734.4,944.5 L751.6,944.5 L756.8,955.7 L755.0,962.6 L768.8,967.7 L770.5,979.8 L782.6,981.5 L792.9,979.8 L801.5,986.7 L822.1,993.5 L818.7,1003.9 L820.4,1021.1 L801.5,1029.7 L801.5,1038.3"/><path d="M717.2,880.0 L718.9,900.6 L729.2,914.4 L739.6,921.3 L724.1,931.6 L725.8,948.8"/><path d="M540.0,971.2 L555.5,979.8 L565.8,983.2 L581.3,993.5 L593.3,997.0 L607.1,997.0 L626.0,1002.1"/><path d="M560.6,1026.2 L581.3,1021.1 L591.6,1015.9 L608.8,1012.5 L620.9,1014.2"/><path d="M619.1,1014.2 L629.5,1021.1 L646.7,1026.2 L670.7,1015.9 L682.8,1015.9 L698.3,1022.8 L703.4,1034.8 L701.7,1045.1 L706.9,1048.6 L700.0,1060.6"/><path d="M670.7,1015.9 L677.6,1031.4 L687.9,1045.1 L700.0,1045.1"/><path d="M629.5,1021.1 L615.7,1034.8 L608.8,1052.0 L612.3,1069.2 L622.6,1076.1"/><path d="M442.5,930.0 L446.0,947.2 L439.1,950.6 L434.9,963.0 L432.2,971.3 L425.3,965.8 L417.1,960.3 L404.7,962.3"/><path d="M395.0,967.2 L400.5,974.0 L414.3,986.4 L421.2,985.0 L422.6,990.5 L439.1,998.8 L458.3,1004.3 L452.8,1019.4 L452.8,1029.1 L446.0,1031.8 L434.9,1051.1 L444.6,1059.4 L447.3,1074.5 L441.8,1090.0"/><path d="M452.8,1029.1 L463.8,1026.3 L485.9,1029.1 L498.2,1024.9 L512.0,1026.3 L523.0,1024.9 L510.6,1012.6 L509.3,993.3 L503.8,981.6 L528.5,969.9 L535.4,969.9 L550.5,978.2 L554.7,982.3 L568.4,983.7 L580.0,994.7"/><path d="M520.3,1004.3 L536.8,1004.3 L550.5,1007.1 L565.7,1001.6 L580.0,996.1"/><path d="M527.1,930.0 L532.7,943.8 L534.0,957.5 L536.8,969.9"/><path d="M444.6,1051.1 L461.1,1048.3 L469.4,1056.6 L477.6,1047.0 L488.6,1034.6 L505.1,1037.3 L518.9,1045.6 L539.5,1042.8 L553.3,1041.5 L554.7,1029.1 L580.0,1024.9"/><path d="M520.3,1062.1 L536.8,1060.7 L554.7,1053.8 L580.0,1058.0"/><path d="M465.3,894.7 L473.6,896.1"/><path d="M345.6,1097.3 L354.6,1103.3 L374.2,1106.3 L390.8,1112.3 L401.4,1112.3"/><path d="M264.1,1119.9 L273.2,1116.9 L273.2,1119.9 L291.3,1118.4 L294.3,1124.4 L286.8,1133.5 L285.2,1153.1 L280.7,1154.6 L286.8,1163.6 L283.7,1171.2 L289.8,1186.2"/><path d="M545.3,1067.8 L550.5,1071.2 L553.3,1068.9 L561.9,1068.9 L577.4,1070.6 L581.4,1072.9 L586.0,1073.5"/><path d="M586.0,1073.5 L583.1,1082.1 L588.3,1086.1 L586.0,1090.1 L587.2,1094.7 L581.4,1095.9 L584.9,1098.7 L591.7,1106.2 L596.3,1105.0"/><path d="M545.3,1067.8 L544.7,1071.8 L549.9,1083.8 L565.4,1103.3 L576.3,1111.4"/><path d="M520.1,1050.0 L521.2,1056.9 L522.9,1061.5 L528.7,1062.6 L539.0,1063.8 L544.7,1055.2 L547.0,1050.0"/><path d="M565.9,1057.5 L575.7,1059.2 L580.3,1056.3 L588.9,1052.3 L600.0,1052.3"/><path d="M580.3,1056.3 L582.0,1064.9 L586.0,1068.3"/><path d="M530.0,1035.8 L552.4,1037.8 L553.4,1047.5 L567.0,1058.3 L574.8,1059.2 L580.7,1056.3 L590.4,1052.4 L600.2,1052.4 L609.9,1068.0 L610.9,1073.9 L621.6,1076.8 L623.6,1082.6 L627.5,1089.5 L656.7,1092.4 L676.2,1085.6 L690.8,1091.4"/><path d="M621.6,1076.8 L620.6,1090.4 L627.5,1100.2 L622.6,1105.0 L621.6,1112.8 L619.7,1113.8 L627.5,1123.6 L627.5,1128.4"/><path d="M625.5,1128.4 L637.2,1125.5 L656.7,1128.4 L664.5,1122.6 L674.2,1117.7 L684.0,1118.7"/><path d="M664.5,1122.6 L667.4,1126.5 L662.6,1137.2"/><path d="M584.6,1109.9 L596.3,1108.0 L600.2,1117.7 L604.1,1135.3 L627.5,1128.4"/><path d="M604.1,1135.3 L600.2,1150.0"/><path d="M579.7,1056.3 L582.6,1067.0 L586.5,1068.0"/><path d="M830.0,1093.5 L849.4,1101.6 L872.0,1108.0 L888.2,1109.6 L897.9,1119.3 L907.5,1125.8 L918.9,1119.3"/><path d="M838.1,1125.8 L851.0,1125.8 L862.3,1133.9 L862.3,1146.8 L872.0,1151.6 L891.4,1164.6 L897.9,1153.2 L912.4,1154.9 L917.2,1169.4"/><path d="M867.2,1153.2 L872.0,1169.4 L878.5,1187.2 L888.2,1211.4 L891.4,1222.7"/><path d="M830.0,1190.4 L847.8,1185.6 L872.0,1190.4"/><path d="M930.2,967.5 L920.5,986.8 L899.5,988.5 L901.1,1001.4 L894.6,1014.3 L904.3,1024.0 L917.2,1030.5 L923.7,1045.0"/><path d="M777.6,1198.2 L784.5,1195.5 L812.0,1194.1 L846.4,1188.6 L867.1,1187.2 L880.0,1191.4"/><path d="M835.4,1214.8 L836.8,1198.2 L846.4,1188.6"/></g><g fill="none" stroke="#626262" stroke-width="1.25" stroke-dasharray="3.5 2.8"><path d="M774.5,701.2 L777.8,714.1 L789.1,722.2 L793.9,727.1 L797.1,746.4 L792.3,749.7 L784.2,751.3 L777.8,754.5 L768.1,759.4"/><path d="M797.1,746.4 L802.0,762.6 L811.7,772.3 L824.6,770.7 L840.7,767.4 L860.1,769.0 L873.0,764.2 L889.2,762.6 L902.1,765.8"/><path d="M902.1,765.8 L898.9,778.7 L900.5,794.9 L892.4,803.0 L873.0,806.2 L856.9,804.6 L844.0,801.3 L837.5,811.0 L827.8,819.1"/><path d="M902.1,765.8 L915.0,767.4 L921.5,762.6 L929.5,752.9 L924.7,730.3 L931.2,719.0"/><path d="M898.9,698.0 L902.1,710.9 L905.3,717.4 L903.7,730.3 L913.4,730.3 L929.5,719.0"/><path d="M764.8,765.8 L766.5,778.7 L769.7,791.7 L764.8,803.0 L760.0,807.8"/><path d="M760.0,827.2 L776.1,819.1 L792.3,811.0 L808.4,812.6 L824.6,819.1 L832.7,825.6 L827.8,838.5 L837.5,840.1 L855.3,840.1 L873.0,835.3 L881.1,830.4 L894.0,830.4 L905.3,833.6 L908.6,836.9 L897.3,843.3 L889.2,856.2 L892.4,870.8"/><path d="M792.3,819.1 L792.3,835.3 L802.0,843.3 L798.8,859.5 L805.2,862.7 L811.7,859.5 L827.8,862.7 L853.7,862.7 L860.1,859.5"/><path d="M916.6,772.3 L918.2,786.8 L926.3,794.9 L929.5,801.3 L953.8,794.9 L976.4,801.3 L979.6,814.3 L982.8,827.2 L981.2,843.3 L986.1,859.5"/><path d="M957.0,822.3 L969.9,820.7 L978.0,823.9"/><path d="M1010.3,751.3 L1030.0,751.3"/><path d="M947.3,838.5 L950.5,849.8 L950.5,861.1 L947.3,867.5 L953.8,869.2 L963.5,872.4 L969.9,869.2 L976.4,872.4 L986.1,867.5 L1002.2,865.9 L1015.1,865.9"/><path d="M892.4,870.8 L902.1,869.2 L913.4,875.6 L918.2,872.4 L934.4,862.7 L942.5,859.5"/><path d="M760.0,896.6 L769.7,891.8 L779.4,888.5 L787.5,885.3 L792.3,875.6"/><path d="M789.1,891.8 L800.4,895.0 L805.2,901.5 L808.4,912.8 L805.2,924.1 L816.5,922.4 L827.8,917.6 L840.7,917.6"/><path d="M840.7,917.6 L844.0,907.9 L852.0,899.8 L860.1,898.2 L873.0,901.5 L882.7,898.2"/><path d="M897.3,891.8 L894.0,907.9 L898.9,924.1 L905.3,937.0 L916.6,935.4 L927.9,940.2"/><path d="M760.0,943.4 L776.1,945.1 L792.3,949.9 L803.6,949.9 L816.5,953.1 L827.8,956.4 L850.4,956.4 L863.3,962.8 L881.1,964.4 L889.2,972.5"/><path d="M800.4,956.4 L802.0,972.5 L808.4,985.4 L806.8,1000.0"/><path d="M832.7,975.7 L837.5,988.7 L844.0,1000.0"/><path d="M929.5,883.7 L921.5,899.8 L913.4,907.9 L918.2,920.8 L924.7,927.3"/><path d="M1015.1,865.9 L1018.4,875.6 L1015.1,891.8 L1024.8,901.5 L1030.0,904.7"/><path d="M860.0,990.0 L880.0,1010.0 L900.0,1005.0 L920.0,1030.0"/><path d="M850.0,1040.0 L870.0,1050.0 L890.0,1060.0"/></g><g font-family="Liberation Sans, sans-serif" font-weight="bold" font-size="23" letter-spacing="-0.4" fill="#1a1a1a" stroke="#ffffff" stroke-opacity="0.85" stroke-width="5" paint-order="stroke" stroke-linejoin="round"><text x="429.5" y="770.5">Norway</text><text x="626" y="749">Finland</text><text x="432.8" y="880.4">Denmark</text><text x="325.8" y="891.5">United</text><text x="312.8" y="916.4">Kingdom</text><text x="221" y="937">Ireland</text><text x="425" y="967.5">Germany</text><text x="541.5" y="942">Poland</text><text x="644.7" y="920.5">Belarus</text><text x="681.5" y="999.6">Ukraine</text><text x="488.5" y="1026">Austria</text><text x="358" y="1052.7">France</text><text x="602.6" y="1065.5">Romania</text><text x="482" y="1106.3">Italy</text><text x="301.5" y="1138.7">Spain</text><text x="222.7" y="1182.8">Portugal</text><text x="585.6" y="1163.7">Greece</text><text x="729" y="1172.2">Türkiye</text><text x="781.5" y="1224.3">Syria</text><text x="435" y="1241">Tunisia</text><text x="974" y="1172">Turkmenistan</text></g><circle cx="465.4" cy="760.2" r="10" fill="#5dbbd6" fill-opacity="0.88"/><circle cx="540.0" cy="739.5" r="10" fill="#5dbbd6" fill-opacity="0.88"/><circle cx="471.5" cy="871.6" r="10" fill="#5dbbd6" fill-opacity="0.88"/><circle cx="273.3" cy="928.2" r="10" fill="#5dbbd6" fill-opacity="0.88"/><circle cx="348.2" cy="931.6" r="10" fill="#5dbbd6" fill-opacity="0.88"/><circle cx="428.1" cy="948.1" r="10" fill="#5dbbd6" fill-opacity="0.88"/><circle cx="473.7" cy="963.3" r="10" fill="#5dbbd6" fill-opacity="0.88"/><circle cx="659.9" cy="816.3" r="10" fill="#5dbbd6" fill-opacity="0.88"/><circle cx="658.6" cy="855.0" r="10" fill="#5dbbd6" fill-opacity="0.88"/><circle cx="638.7" cy="885.9" r="10" fill="#5dbbd6" fill-opacity="0.88"/><circle cx="685.6" cy="921.3" r="10" fill="#5dbbd6" fill-opacity="0.88"/><circle cx="587.5" cy="948.1" r="10" fill="#5dbbd6" fill-opacity="0.88"/><circle cx="419.2" cy="975.5" r="10" fill="#5dbbd6" fill-opacity="0.88"/><circle cx="435.0" cy="990.7" r="10" fill="#5dbbd6" fill-opacity="0.88"/><circle cx="540.0" cy="990.7" r="10" fill="#5dbbd6" fill-opacity="0.88"/><circle cx="394.9" cy="1045.2" r="10" fill="#5dbbd6" fill-opacity="0.88"/><circle cx="455.7" cy="1040.5" r="10" fill="#5dbbd6" fill-opacity="0.88"/><circle cx="475.1" cy="1035.0" r="10" fill="#5dbbd6" fill-opacity="0.88"/><circle cx="535.9" cy="1026.7" r="10" fill="#5dbbd6" fill-opacity="0.88"/><circle cx="534.5" cy="1052.4" r="10" fill="#5dbbd6" fill-opacity="0.88"/><circle cx="450.2" cy="1090.8" r="10" fill="#5dbbd6" fill-opacity="0.88"/><circle cx="384.4" cy="1109.6" r="10" fill="#5dbbd6" fill-opacity="0.88"/><circle cx="508.2" cy="1086.1" r="10" fill="#5dbbd6" fill-opacity="0.88"/><circle cx="510.4" cy="1107.4" r="10" fill="#5dbbd6" fill-opacity="0.88"/><circle cx="507.7" cy="1120.1" r="10" fill="#5dbbd6" fill-opacity="0.88"/><circle cx="275.2" cy="1143.6" r="10" fill="#5dbbd6" fill-opacity="0.88"/><circle cx="324.4" cy="1144.7" r="10" fill="#5dbbd6" fill-opacity="0.88"/><circle cx="530.3" cy="1206.3" r="10" fill="#5dbbd6" fill-opacity="0.88"/><circle cx="588.1" cy="1008.7" r="10" fill="#5dbbd6" fill-opacity="0.88"/><circle cx="583.9" cy="1036.3" r="10" fill="#5dbbd6" fill-opacity="0.88"/><circle cx="691.7" cy="1034.4" r="10" fill="#5dbbd6" fill-opacity="0.88"/><circle cx="723.5" cy="1003.2" r="10" fill="#5dbbd6" fill-opacity="0.88"/><circle cx="650.3" cy="1057.1" r="10" fill="#5dbbd6" fill-opacity="0.88"/><circle cx="556.3" cy="1058.4" r="10" fill="#5dbbd6" fill-opacity="0.88"/><circle cx="568.7" cy="1083.3" r="10" fill="#5dbbd6" fill-opacity="0.88"/><circle cx="603.3" cy="1086.1" r="10" fill="#5dbbd6" fill-opacity="0.88"/><circle cx="585.3" cy="1106.0" r="10" fill="#5dbbd6" fill-opacity="0.88"/><circle cx="653.0" cy="1106.0" r="10" fill="#5dbbd6" fill-opacity="0.88"/><circle cx="613.0" cy="1123.4" r="10" fill="#5dbbd6" fill-opacity="0.88"/><circle cx="593.6" cy="1130.3" r="10" fill="#5dbbd6" fill-opacity="0.88"/><circle cx="614.3" cy="1153.8" r="10" fill="#5dbbd6" fill-opacity="0.88"/><circle cx="766.4" cy="1162.1" r="10" fill="#5dbbd6" fill-opacity="0.88"/><circle cx="861.7" cy="1114.6" r="10" fill="#5dbbd6" fill-opacity="0.88"/><circle cx="874.1" cy="1140.0" r="10" fill="#5dbbd6" fill-opacity="0.88"/><circle cx="905.9" cy="1141.4" r="10" fill="#5dbbd6" fill-opacity="0.88"/><circle cx="744.2" cy="1217.4" r="10" fill="#5dbbd6" fill-opacity="0.88"/></svg><div style="position:absolute;left:50px;top:690px;width:996px;height:560px;box-sizing:border-box;border:3px solid #3f72f2"></div><div style="position:absolute;left:928px;top:658px;width:118px;height:35px;background:#4677f0;border-radius:5px 5px 0 0"></div><div style="position:absolute;left:937.8px;top:663.8px;width:4.4px;height:4.4px;background:#fff;border-radius:50%"></div><div style="position:absolute;left:937.8px;top:671.8px;width:4.4px;height:4.4px;background:#fff;border-radius:50%"></div><div style="position:absolute;left:937.8px;top:679.8px;width:4.4px;height:4.4px;background:#fff;border-radius:50%"></div><div style="position:absolute;left:945.8px;top:663.8px;width:4.4px;height:4.4px;background:#fff;border-radius:50%"></div><div style="position:absolute;left:945.8px;top:671.8px;width:4.4px;height:4.4px;background:#fff;border-radius:50%"></div><div style="position:absolute;left:945.8px;top:679.8px;width:4.4px;height:4.4px;background:#fff;border-radius:50%"></div><div class="t" style="left:961.5px;top:661.84px;font-size:25px;color:#fff;letter-spacing:0.3px">chart2</div><div style="position:absolute;left:45px;top:685px;width:16px;height:16px;box-sizing:border-box;border:2.5px solid #3f72f2;border-radius:4px;background:#f5f5f5"></div><div style="position:absolute;left:1035px;top:685px;width:16px;height:16px;box-sizing:border-box;border:2.5px solid #3f72f2;border-radius:4px;background:#f5f5f5"></div><div style="position:absolute;left:45px;top:1239px;width:16px;height:16px;box-sizing:border-box;border:2.5px solid #3f72f2;border-radius:4px;background:#f5f5f5"></div><div style="position:absolute;left:1035px;top:1239px;width:16px;height:16px;box-sizing:border-box;border:2.5px solid #3f72f2;border-radius:4px;background:#f5f5f5"></div><div style="position:absolute;left:86px;top:718px;width:336px;height:80px;background:#fff;border-radius:3px;box-shadow:0 1px 4px rgba(0,0,0,0.3);"></div><div style="position:absolute;left:223px;top:718px;width:2px;height:80px;background:#ebebeb"></div><div class="t" style="left:121px;top:740.53px;font-size:36px;font-weight:bold;color:#000;letter-spacing:-1px">Map</div><div class="t" style="left:260px;top:740.53px;font-size:36px;color:#565656">Satellite</div><div style="position:absolute;left:930px;top:718px;width:80px;height:80px;background:#fff;border-radius:3px;box-shadow:0 1px 4px rgba(0,0,0,0.3);"></div><svg style="position:absolute;left:930px;top:718px" width="80" height="80" viewBox="0 0 80 80"><path d="M24 34 V24 H34 M46 24 H56 V34 M56 46 V56 H46 M34 56 H24 V46" fill="none" stroke="#666" stroke-width="4.5"/></svg><div style="position:absolute;left:930px;top:888px;width:80px;height:80px;background:#fff;border-radius:3px;box-shadow:0 1px 4px rgba(0,0,0,0.3);"></div><svg style="position:absolute;left:930px;top:888px" width="80" height="80" viewBox="0 0 80 80"><path d="M27.3,31.6 Q29,30 33,30 H44.5 Q48.5,30 50.2,31.6 L55.3,50 Q56,53.5 53,53.5 Q51,53.5 50.2,51 L47.4,43.8 V69.4 H30.2 V43.8 L27.4,51 Q26.6,53.5 24.6,53.5 Q21.6,53.5 22.3,50 Z" fill="#f3bd49" stroke="#6b6b6b" stroke-width="1.7" stroke-linejoin="round"/><path d="M32.4 30.6 H45.2 L38.8 40.7 Z" fill="#d9853b"/><line x1="38.8" y1="53.5" x2="38.8" y2="69.4" stroke="#6b6b6b" stroke-width="1.2"/><circle cx="38.8" cy="20.1" r="10.2" fill="#f3bd49" stroke="#6b6b6b" stroke-width="1.7"/></svg><div style="position:absolute;left:930px;top:1032px;width:80px;height:162px;background:#fff;border-radius:3px;box-shadow:0 1px 4px rgba(0,0,0,0.3);"></div><div style="position:absolute;left:940px;top:1112px;width:60px;height:2px;background:#e6e6e6"></div><div style="position:absolute;left:952px;top:1069px;width:36px;height:6px;background:#666"></div><div style="position:absolute;left:967px;top:1054px;width:6px;height:36px;background:#666"></div><div style="position:absolute;left:952px;top:1151px;width:36px;height:6px;background:#666"></div><div style="position:absolute;left:454px;top:1214px;width:576px;height:28px;background:rgba(245,245,245,0.72)"></div><div style="position:absolute;left:649px;top:1216px;width:1.5px;height:26px;background:#8fb0f0"></div><div class="t" style="left:464px;top:1219.92px;font-size:19px;color:#000;letter-spacing:0.45px">Keyboard shortcuts</div><div class="t" style="left:661.5px;top:1219.92px;font-size:19px;color:#000;letter-spacing:0.2px">Map data ©2023 Google, INEGI</div><div class="t" style="left:963px;top:1219.92px;font-size:19px;color:#000;letter-spacing:0.6px">Terms</div><svg style="position:absolute;left:66px;top:1185px" width="150" height="57" viewBox="66 1185 150 57"><g opacity="0.62"><path d="M107.9,1204.4 A11,11 0 1,0 111.1,1212.2 H101.5" stroke="#fff" stroke-width="9.6" fill="none"/><circle cx="124.7" cy="1216.7" r="6.8" stroke="#fff" stroke-width="8.8" fill="none"/><circle cx="144.1" cy="1216.7" r="6.8" stroke="#fff" stroke-width="8.8" fill="none"/><circle cx="163.3" cy="1216.7" r="6.8" stroke="#fff" stroke-width="8.8" fill="none"/><path d="M170.1,1208 V1226 Q170.1,1232.6 163.2,1232.6 Q158.3,1232.6 156.4,1229" stroke="#fff" stroke-width="8.8" fill="none"/><path d="M177.1,1199.2 V1225.3" stroke="#fff" stroke-width="9.2" fill="none"/><path d="M182.2,1217.5 L195.4,1214.8 A6.8,6.8 0 1,0 193.6,1221.6" stroke="#fff" stroke-width="8.8" fill="none"/></g><path d="M107.9,1204.4 A11,11 0 1,0 111.1,1212.2 H101.5" stroke="#4285f4" stroke-width="4.3" fill="none"/><circle cx="124.7" cy="1216.7" r="7" stroke="#ea4335" stroke-width="3.5" fill="none"/><circle cx="144.1" cy="1216.7" r="7" stroke="#fbbc05" stroke-width="3.5" fill="none"/><circle cx="163.3" cy="1216.7" r="7" stroke="#4285f4" stroke-width="3.5" fill="none"/><path d="M170.1,1208 V1226 Q170.1,1232.6 163.2,1232.6 Q158.3,1232.6 156.4,1229" stroke="#4285f4" stroke-width="3.5" fill="none"/><path d="M177.1,1199.2 V1225.3" stroke="#34a853" stroke-width="3.8" fill="none"/><path d="M182.2,1217.5 L195.4,1214.8 A6.8,6.8 0 1,0 193.6,1221.6" stroke="#ea4335" stroke-width="3.5" fill="none"/></svg>
</body></html>
